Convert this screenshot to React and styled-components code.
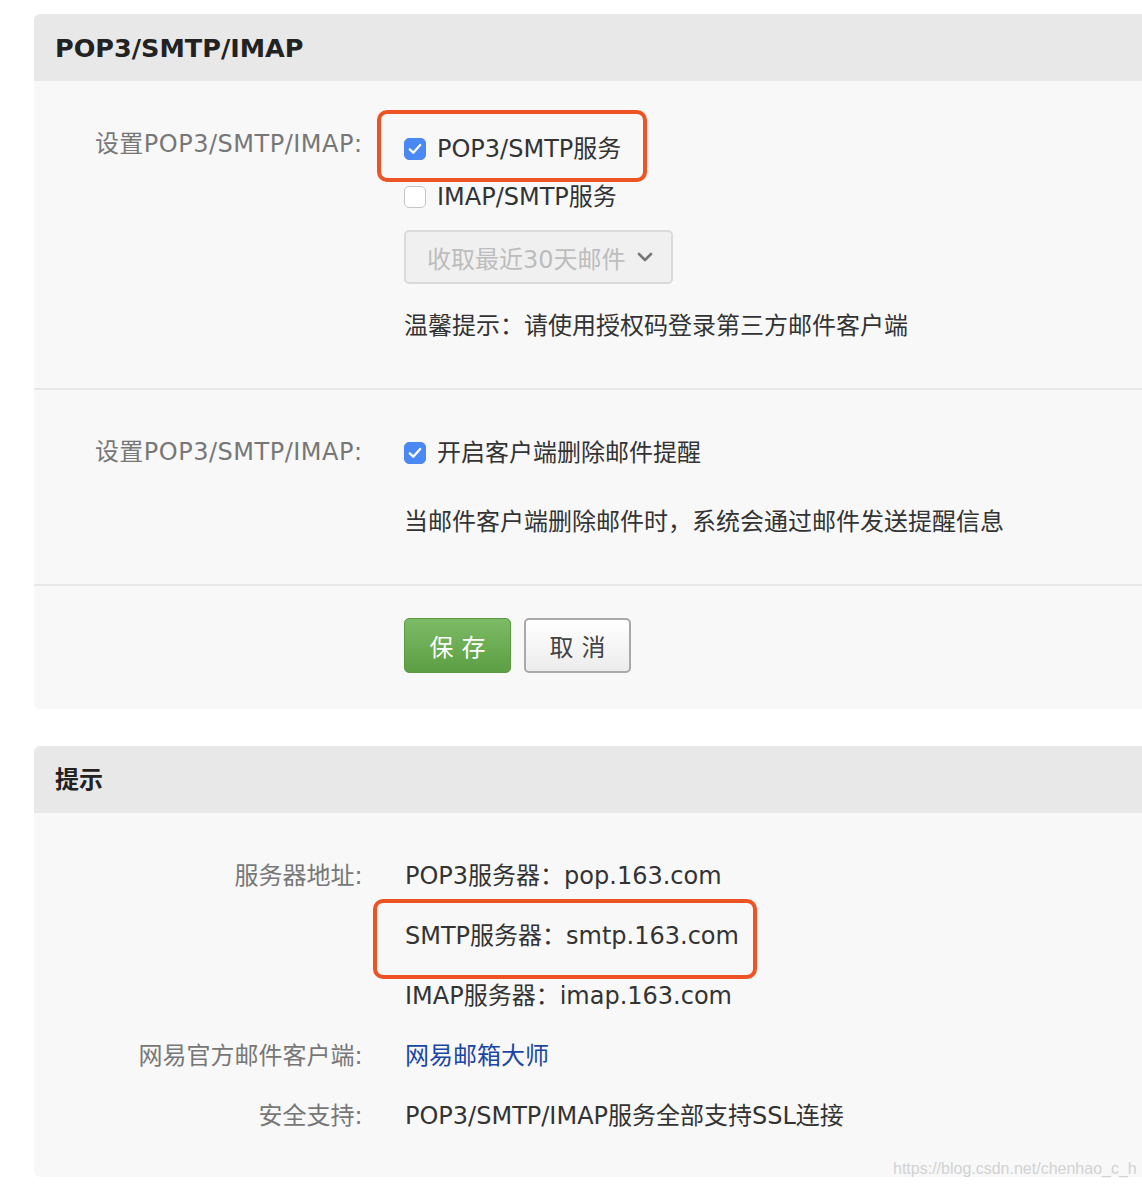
import React from "react";
import styled, { createGlobalStyle } from "styled-components";

const Global = createGlobalStyle`
  html, body { margin: 0; padding: 0; background: #ffffff; }
  body { font-family: "DejaVu Sans", "Noto Sans CJK SC", sans-serif; }
`;

const Page = styled.div`
  position: relative;
  width: 1142px;
  height: 1188px;
  overflow: hidden;
  padding: 14px 0 0 34px;
  box-sizing: border-box;
  display: flex;
  flex-direction: column;
  gap: 37px;
`;

const Panel = styled.section`
  width: 1120px;
  background: #f8f8f8;
  border-radius: 6px 0 0 6px;
  overflow: hidden;
`;

const PanelHeader = styled.header`
  height: 67px;
  box-sizing: border-box;
  background: #e8e8e8;
  display: flex;
  align-items: center;
  padding-left: 21px;
  padding-bottom: ${(p) => p.$pb || "0px"};
  font-family: "DejaVu Sans", "Noto Sans CJK SC", sans-serif;
  font-weight: bold;
  font-size: ${(p) => p.$fs || "25.5px"};
  color: #222;
`;

const Section = styled.div`
  padding: ${(p) => p.$pad};
  border-top: ${(p) => (p.$divided ? "2px solid #e8e8e8" : "none")};
  display: flex;
  flex-direction: column;
`;

const Row = styled.div`
  display: grid;
  grid-template-columns: 328px 1fr;
  column-gap: 42px;
  align-items: start;
`;

const Label = styled.div`
  text-align: right;
  font-size: 24px;
  letter-spacing: ${(p) => p.$ls || "0.5px"};
  line-height: ${(p) => p.$lh || "40px"};
  padding-top: ${(p) => p.$pt || "0px"};
  margin-right: -0.5px;
  color: #777;
  white-space: nowrap;
`;

const Values = styled.div`
  display: flex;
  flex-direction: column;
  align-items: flex-start;
`;

const Option = styled.label`
  position: relative;
  display: flex;
  align-items: center;
  height: 48px;
  gap: 11px;
  font-size: 24px;
  color: #333;
  white-space: nowrap;
`;

const Box = styled.span`
  width: 22px;
  height: 22px;
  margin-top: 6px;
  box-sizing: border-box;
  border-radius: 5px;
  background: ${(p) => (p.$on ? "#4a89f3" : "#ffffff")};
  border: 1px solid ${(p) => (p.$on ? "#4a89f3" : "#c4c4c4")};
  display: flex;
  align-items: center;
  justify-content: center;
  flex-shrink: 0;
`;

const Highlight = styled.span`
  position: absolute;
  top: ${(p) => p.$top}px;
  left: ${(p) => p.$left}px;
  width: ${(p) => p.$w}px;
  height: ${(p) => p.$h}px;
  box-sizing: border-box;
  border: 4px solid #ee5324;
  border-radius: 10px;
  pointer-events: none;
`;

const Select = styled.div`
  margin-top: 12px;
  width: 269px;
  height: 54px;
  box-sizing: border-box;
  background: #f0f0f0;
  border: 2px solid #dadada;
  border-radius: 5px;
  display: flex;
  align-items: center;
  padding-left: 21px;
  gap: 11px;
  font-size: 24px;
  color: #bdbdbd;
  white-space: nowrap;
`;

const Text = styled.div`
  margin-top: ${(p) => p.$mt || "0px"};
  font-size: 24px;
  line-height: 36px;
  color: #333;
  white-space: nowrap;
`;

const ButtonBar = styled.div`
  display: flex;
  gap: 13px;
  padding-left: 370px;
`;

const Button = styled.button`
  width: 107px;
  height: 55px;
  box-sizing: border-box;
  border-radius: 5px;
  font-family: "DejaVu Sans", "Noto Sans CJK SC", sans-serif;
  font-size: 24px;
  letter-spacing: 8px;
  text-indent: 8px;
  padding: 0;
  cursor: pointer;
  ${(p) =>
    p.$primary
      ? `
    color: #ffffff;
    background: linear-gradient(#7dba66, #5c9f43);
    border: 1px solid #5a9a40;
  `
      : `
    color: #444;
    background: linear-gradient(#ffffff, #ececec);
    border: 2px solid #a9a9a9;
  `}
`;

const InfoBody = styled.div`
  padding: 33px 0 31px;
  display: flex;
  flex-direction: column;
`;

const InfoRow = styled.div`
  display: grid;
  grid-template-columns: 328px 1fr;
  column-gap: 43px;
  height: 60px;
  align-items: center;
`;

const InfoValue = styled.div`
  position: relative;
  font-size: 24px;
  line-height: 60px;
  color: ${(p) => (p.$link ? "#1a47a3" : "#333")};
  white-space: nowrap;
`;

const Watermark = styled.div`
  position: absolute;
  left: 893px;
  top: 1160px;
  font-family: "Liberation Sans", Arial, sans-serif;
  font-size: 16px;
  color: #d2d2d2;
  white-space: nowrap;
`;

const Check = () => (
  <svg width="14" height="12" viewBox="0 0 14 12">
    <path d="M1.8 6.4 L5.3 9.8 L12.2 2" fill="none" stroke="#fff" strokeWidth="2.3" strokeLinecap="round" strokeLinejoin="round" />
  </svg>
);

const Chevron = () => (
  <svg width="16" height="10" viewBox="0 0 16 10">
    <path d="M2 2 L8 8 L14 2" fill="none" stroke="#777" strokeWidth="2.6" strokeLinecap="round" strokeLinejoin="round" />
  </svg>
);

export default function App() {
  return (
    <>
      <Global />
      <Page>
        <Panel>
          <PanelHeader>POP3/SMTP/IMAP</PanelHeader>
          <Section $pad="41px 0 44px">
            <Row>
              <Label $pt="2px">设置POP3/SMTP/IMAP:</Label>
              <Values>
                <Option>
                  <Highlight $top={-12} $left={-27} $w={270} $h={72} />
                  <Box $on><Check /></Box>
                  POP3/SMTP服务
                </Option>
                <Option>
                  <Box />
                  IMAP/SMTP服务
                </Option>
                <Select>
                  收取最近30天邮件
                  <Chevron />
                </Select>
                <Text $mt="24px">温馨提示：请使用授权码登录第三方邮件客户端</Text>
              </Values>
            </Row>
          </Section>
          <Section $divided $pad="36px 0 44px">
            <Row>
              <Label $pt="6px">设置POP3/SMTP/IMAP:</Label>
              <Values>
                <Option>
                  <Box $on><Check /></Box>
                  开启客户端删除邮件提醒
                </Option>
                <Text $mt="30px">当邮件客户端删除邮件时，系统会通过邮件发送提醒信息</Text>
              </Values>
            </Row>
          </Section>
          <Section $divided $pad="32px 0 36px">
            <ButtonBar>
              <Button $primary>保存</Button>
              <Button>取消</Button>
            </ButtonBar>
          </Section>
        </Panel>
        <Panel>
          <PanelHeader $fs="24px" $pb="5px">提示</PanelHeader>
          <InfoBody>
            <InfoRow>
              <Label $lh="60px" $ls="0px">服务器地址:</Label>
              <InfoValue>POP3服务器：pop.163.com</InfoValue>
            </InfoRow>
            <InfoRow>
              <span />
              <InfoValue>
                <Highlight $top={-7} $left={-32} $w={384} $h={80} />
                SMTP服务器：smtp.163.com
              </InfoValue>
            </InfoRow>
            <InfoRow>
              <span />
              <InfoValue>IMAP服务器：imap.163.com</InfoValue>
            </InfoRow>
            <InfoRow>
              <Label $lh="60px" $ls="0px">网易官方邮件客户端:</Label>
              <InfoValue $link>网易邮箱大师</InfoValue>
            </InfoRow>
            <InfoRow>
              <Label $lh="60px" $ls="0px">安全支持:</Label>
              <InfoValue>POP3/SMTP/IMAP服务全部支持SSL连接</InfoValue>
            </InfoRow>
          </InfoBody>
        </Panel>
        <Watermark>https://blog.csdn.net/chenhao_c_h</Watermark>
      </Page>
    </>
  );
}
